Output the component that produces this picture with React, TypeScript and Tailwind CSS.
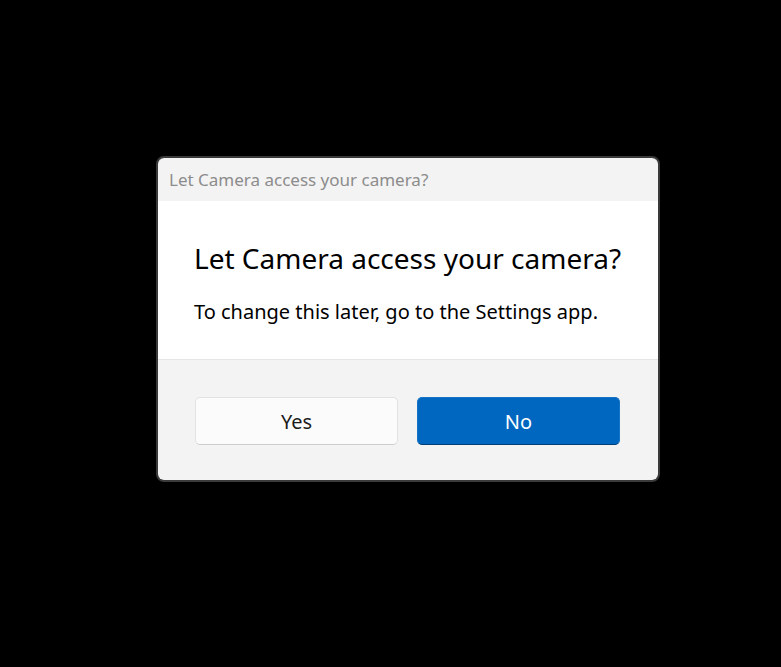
import React from 'react';

export default function App() {
  return (
    <div className="min-h-screen w-full bg-black pt-[156px] pl-[156px] font-['Noto_Sans',sans-serif]">
      <div className="w-[504px] h-[326px] rounded-[8px] border-2 border-[#3a3a3a] overflow-hidden flex flex-col">
        {/* title bar */}
        <div className="h-[43px] bg-[#f3f3f3] flex items-center pl-[11px]">
          <span className="text-[17px] text-[#8c8c8c]">Let Camera access your camera?</span>
        </div>

        {/* body */}
        <div className="h-[159px] bg-white pl-[36px] pt-[38px] border-b border-[#e5e5e5]">
          <h1 className="text-[28px] leading-[38px] text-black">Let Camera access your camera?</h1>
          <p className="mt-[21px] text-[20px] leading-[28px] text-black">To change this later, go to the Settings app.</p>
        </div>

        {/* footer */}
        <div className="flex-1 bg-[#f3f3f3] pl-[37px] pr-[38px] pt-[37px]">
          <div className="grid grid-cols-2 gap-[19px]">
            <button className="h-[48px] rounded-[5px] bg-[#fbfbfb] border border-[#e2e2e2] border-b-[#cdcdcd] text-[20px] text-[#1b1b1b] pt-[1px]">
              Yes
            </button>
            <button className="h-[48px] rounded-[5px] bg-[#0067c0] border border-[#1473c5] border-b-[#003e73] text-[20px] text-white pt-[1px]">
              No
            </button>
          </div>
        </div>
      </div>
    </div>
  );
}
